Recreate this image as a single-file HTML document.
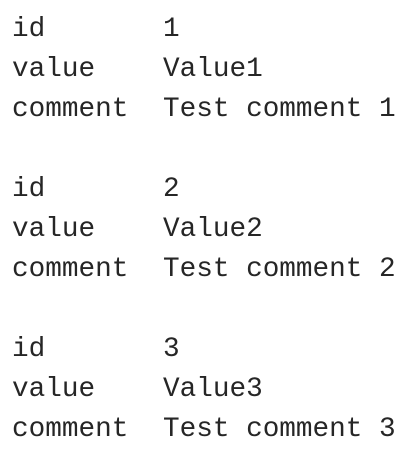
<!DOCTYPE html>
<html><head><style>
html,body{margin:0;padding:0;background:#fff;width:413px;height:452px;overflow:hidden}
.c{position:absolute;top:10px;font-family:"Liberation Mono",monospace;font-size:27.7px;line-height:40px;color:#262626;white-space:pre}
</style></head><body>
<div class="c" style="left:12px">id
value
comment

id
value
comment

id
value
comment</div>
<div class="c" style="left:163px">1
Value1
Test comment 1

2
Value2
Test comment 2

3
Value3
Test comment 3</div>
</body></html>
